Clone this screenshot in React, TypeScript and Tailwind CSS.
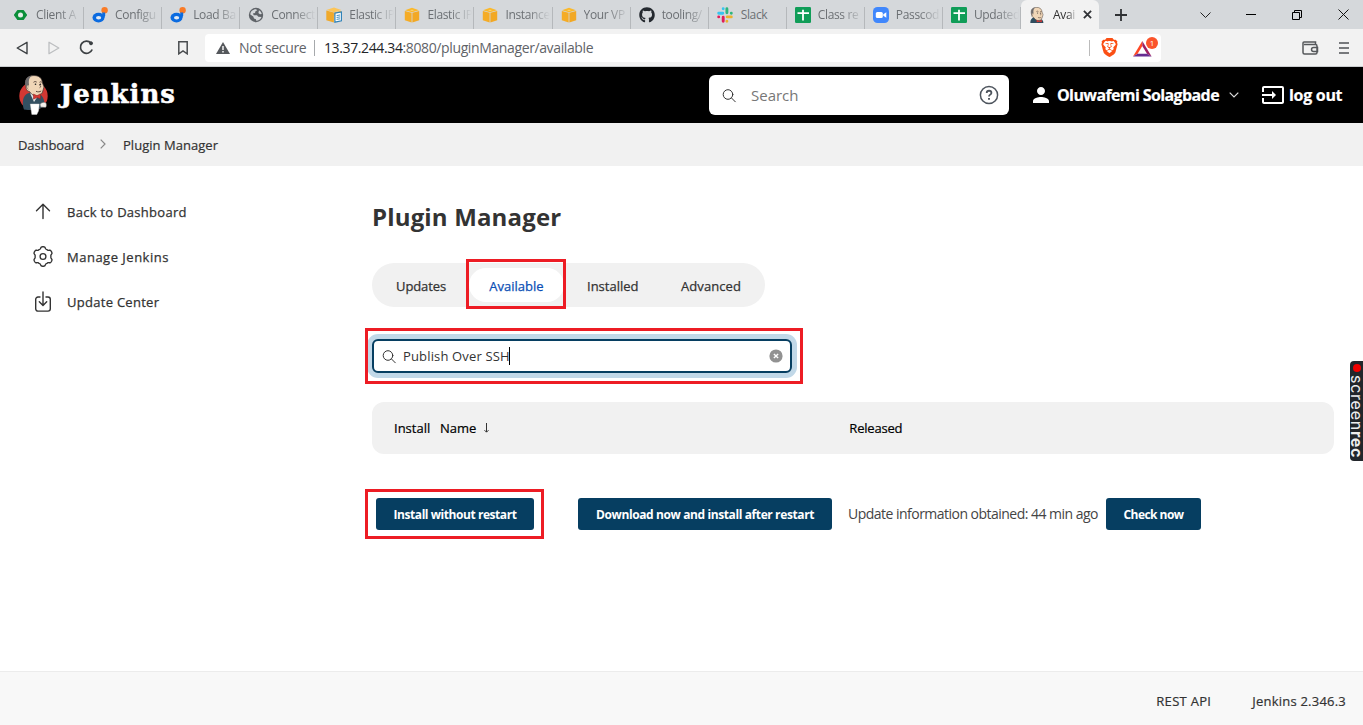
import type { ReactNode } from "react";
import { FaGithub } from "react-icons/fa";
import { SiBrave } from "react-icons/si";
import { MdInput, MdPerson } from "react-icons/md";

const CircleCiIcon = () => (
  <svg viewBox="0 0 16 16" className="size-4">
    <path d="M1.700 8 4.800 3.800h5.400L13.300 8 10.200 12.200H4.800Z" fill="#0b8f3a" stroke="#0b8f3a" strokeWidth="1.500" strokeLinejoin="round" />
    <circle cx="7.500" cy="8" r="2.500" fill="#e6efe9" />
  </svg>
);

const DigitalIcon = () => (
  <svg viewBox="0 0 16 16" className="size-4">
    <circle cx="12.600" cy="3.300" r="3.200" fill="#fa7b26" />
    <ellipse cx="6.500" cy="10.600" rx="6" ry="4.900" fill="#0b6be0" />
    <path d="M10 5.500h3.200v3.200l-1.500 3Z" fill="#0b6be0" />
    <ellipse cx="6.600" cy="10.700" rx="2.600" ry="1.700" fill="#e2eaf3" />
  </svg>
);

const GlobeIcon = () => (
  <svg viewBox="0 0 16 16" className="size-4">
    <circle cx="8" cy="8" r="7.200" fill="#5f6368" />
    <path d="M2.300 7.500C2.300 4.500 4.800 2.200 8 2.200L9.300 3.300 7.500 4.200 7 6 4.800 6.400 5.800 8.200H9l1.300 1.500 3.200.2C12.700 12.300 10.700 13.700 8.200 13.800L8 12.200 6 11.500 5.300 9.500Z" fill="#d5d8db" />
    <path d="M11 3.300c1.400.8 2.400 2.100 2.700 3.700l-1.700.3-1.600-1.300Z" fill="#d5d8db" />
  </svg>
);

const CubeIcon = () => (
  <svg viewBox="0 0 16 16" className="size-4">
    <path d="M1 3.200 8 .8l7 2.400-7 2Z" fill="#fbb829" />
    <path d="M.8 4 7.600 5.800v9.600L.8 13.200Z" fill="#f5ac26" />
    <path d="M15.200 4 8.400 5.800v9.600l6.800-2.200Z" fill="#f2a824" />
    <path d="M6 3.200 8 2.700l2 .5-2 .5Z" fill="#f9d998" />
  </svg>
);

const CubeDocIcon = () => (
  <svg viewBox="0 0 16 16" className="size-4">
    <path d="M.3 3 8 .4 15.300 3 8 5.200Z" fill="#fcc558" />
    <path d="M.3 3.600 7.900 5.600v9.800L.3 13.200Z" fill="#f0a92a" />
    <path d="M15 3.800 8.400 5.600V9H15Z" fill="#f0b03a" />
    <path d="M8.900 6.200 15.400 5v8.800l-6.500 1.400Z" fill="#fff" stroke="#3183b8" strokeWidth="1.200" />
    <path d="m10.600 8.600 3.400-.6m-3.400 2.500 3.400-.6m-3.400 2.500 3.400-.6" stroke="#3183b8" strokeWidth=".9" />
  </svg>
);

const SlackIcon = () => (
  <svg viewBox="0 0 16 16" className="size-4" fill="none" strokeWidth="2.900" strokeLinecap="round">
    <path d="M1.700 6.200h4.100M6.200 1.700h.01" stroke="#36c5f0" />
    <path d="M9.900 1.700v4.100M14.300 6.200h.01" stroke="#2eb67d" />
    <path d="M14.300 9.900h-4.100M9.900 14.300h-.01" stroke="#ecb22e" />
    <path d="M6.200 14.300v-4.100M1.700 9.900h.01" stroke="#e01e5a" />
  </svg>
);

const SheetIcon = () => (
  <svg viewBox="0 0 16 16" className="size-4">
    <rect width="16" height="16" rx="1.200" fill="#109d58" />
    <path d="M2.500 6.200h11.500M8 2.700v10.800" stroke="#fff" strokeWidth="1.800" />
  </svg>
);

const ZoomIcon = () => (
  <svg viewBox="0 0 16 16" className="size-4">
    <rect width="16" height="16" rx="4.500" fill="#4087fc" />
    <rect x="2.800" y="5" width="7" height="6" rx="1.500" fill="#fff" />
    <path d="m10.300 7.200 3-2v5.600l-3-2Z" fill="#fff" />
  </svg>
);

const ButlerHead = () => (
  <g>
    <path d="M7 12C5 5 8 1 14 .6c6-.4 9 2.600 9.500 7.400L25 12l-1.500 5c-1 3-4 4.400-7 4-3-.5-4.500-2.400-6-4.500C8 16.500 7 14 7 12Z" fill="#f0d6b7" stroke="#3b3230" strokeWidth=".7" />
    <path d="M7 12C5 5 7.500 1.400 13 .8c-3 1.700-3.500 5-3 8.700l-1 4.500Z" fill="#6d6b6d" />
    <path d="M9.500 10c-2-.5-2.500 3 0 4.500" fill="#f0d6b7" stroke="#7c6453" strokeWidth=".6" />
    <path d="M14.500 7.300c1-.9 2.200-.9 3.200-.2M20.500 7.300c.8-.7 1.700-.6 2.300 0M17 16.300c2 .9 3.800.6 5.200-.3M20.500 9c0 1.700 2.300 2.500.2 3.700" fill="none" stroke="#4b3931" strokeWidth=".9" />
    <circle cx="16.500" cy="9.300" r=".8" fill="#222" />
    <circle cx="21.500" cy="9.300" r=".7" fill="#222" />
  </g>
);

const ButlerFavicon = () => (
  <svg viewBox="4 0 23 25" className="size-4">
    <path d="M5 25c0-5 2-8 6-9l6 4 6-1c2 2 2.500 4 2.500 6Z" fill="#2f4d5e" />
    <ButlerHead />
    <path d="m15 20 4 2 4-2v4l-4-1-4 1Z" fill="#d33833" />
  </svg>
);

const JenkinsMascot = () => (
  <svg viewBox="0 0 29 40" className="h-10 w-[29px]">
    <circle cx="14.500" cy="21" r="14.200" fill="#d33833" />
    <path d="M5 34.500C3 29 3.500 22 7 19.500c3-2 6-2.500 10-1.500l5 2c3 3 4 8 3 12l-3 1-3 1.500-10 .5Z" fill="#335061" />
    <path d="m11 18 4 9 4-6Z" fill="#e9e9e9" />
    <ButlerHead />
    <path d="m14.500 19 3.500 1.700 3.500-2v5l-3.500-1.200-3.500 1.700Z" fill="#d33833" stroke="#8d1f1c" strokeWidth=".5" />
    <path d="M11.300 29h9l-.8 7-1.700 3.500h-5Z" fill="#fff" stroke="#d8d8d8" strokeWidth=".4" />
    <path d="M21 29.500c1-2 4.500-3 6-1.500.8 1.500.5 4-.5 4.500l-5-.5Z" fill="#f3efec" stroke="#555" strokeWidth=".5" />
  </svg>
);

const SearchGlyph = () => (
  <svg viewBox="0 0 15 15" className="size-[15px]" fill="none" stroke="#333" strokeWidth="1" strokeLinecap="round">
    <circle cx="6" cy="6.500" r="4.800" />
    <path d="m9.600 10.100 3.700 3.700" />
  </svg>
);

const ArrowUpGlyph = () => (
  <svg viewBox="0 0 20 22" className="h-[22px] w-5" fill="none" stroke="#333" strokeWidth="1.400" strokeLinecap="round" strokeLinejoin="round">
    <path d="M10 17.500V3.500M3.500 9.800 10 3.300l6.500 6.500" />
  </svg>
);

const gearOutline =
  Array.from({ length: 120 }, (_, i) => {
    const a = (i / 120) * Math.PI * 2;
    const r = 8.800 + 0.95 * Math.tanh(2.200 * Math.cos(6 * a));
    return `${i ? "L" : "M"}${(10 + r * Math.sin(a)).toFixed(2)} ${(10.500 - r * Math.cos(a)).toFixed(2)}`;
  }).join("") + "Z";

const GearGlyph = () => (
  <svg viewBox="0 0 20 22" className="h-[22px] w-5 shrink-0 overflow-visible" fill="none" stroke="#333" strokeWidth="1.350" strokeLinejoin="round">
    <path d={gearOutline} />
    <circle cx="10" cy="10.500" r="2.900" />
  </svg>
);

const DownloadGlyph = () => (
  <svg viewBox="0 0 20 22" className="h-[22px] w-5" fill="none" stroke="#333" strokeWidth="1.400" strokeLinecap="round" strokeLinejoin="round">
    <path d="M7 6H5A2.300 2.300 0 0 0 2.700 8.300V17.800A2.300 2.300 0 0 0 5 20.100H15A2.300 2.300 0 0 0 17.300 17.800V8.300A2.300 2.300 0 0 0 15 6H13M10 .9V14.200M6.300 10.800 10 14.500l3.700-3.700" />
  </svg>
);

const tabs: { icon: ReactNode; label: string }[] = [
  { icon: <CircleCiIcon />, label: "Client A" },
  { icon: <DigitalIcon />, label: "Configu" },
  { icon: <DigitalIcon />, label: "Load Ba" },
  { icon: <GlobeIcon />, label: "Connect" },
  { icon: <CubeDocIcon />, label: "Elastic IP" },
  { icon: <CubeIcon />, label: "Elastic IP" },
  { icon: <CubeIcon />, label: "Instance" },
  { icon: <CubeIcon />, label: "Your VP" },
  { icon: <FaGithub className="size-4 text-[#24292f]" />, label: "tooling/" },
  { icon: <SlackIcon />, label: "Slack" },
  { icon: <SheetIcon />, label: "Class re" },
  { icon: <ZoomIcon />, label: "Passcod" },
  { icon: <SheetIcon />, label: "Updated" },
];

function TabStrip() {
  return (
    <div className="flex h-[29px] bg-[#d5d8db] pl-[6px] text-xs tracking-[-0.35px] text-[#6c7074]">
      {tabs.map((tab, i) => (
        <div key={i} className="flex w-[78.080px] shrink-0 items-center pl-2 first:pl-[7px]">
          {tab.icon}
          <div className={`h-[29px] w-[46px] ml-[7px] whitespace-nowrap leading-[29px] ${tab.label === "Slack" ? "pl-px" : "[mask-image:linear-gradient(to_right,#000_50%,transparent_98%)]"}`}>
            {tab.label}
          </div>
          <div className="mt-auto ml-auto h-[22px] w-px bg-[#b5b8bb]" />
        </div>
      ))}
      <div className="flex w-[78px] items-center rounded-t-md bg-[#f2f2f2] pl-2 text-[#333]">
        <ButlerFavicon />
        <div className="ml-2 w-6 whitespace-nowrap [mask-image:linear-gradient(to_right,#000_60%,transparent)]">Avai</div>
        <svg viewBox="0 0 10 10" className="ml-[6px] size-[9px]" stroke="#303236" strokeWidth="2"><path d="m1 1 8 8M9 1 1 9" /></svg>
      </div>
      <svg viewBox="0 0 12 12" className="mt-[9px] ml-4 size-3" stroke="#2f3134" strokeWidth="1.800"><path d="M6 0v12M0 6h12" /></svg>
      <div className="ml-auto flex items-center pr-[14px]">
        <svg viewBox="0 0 11 6" className="mr-[35px] h-1.5 w-[11px]" fill="none" stroke="#222"><path d="m.5.500 5 5 5-5" /></svg>
        <div className="mr-9 h-px w-[10px] bg-black" />
        <svg viewBox="0 0 10 10" className="mr-9 size-[10px]" fill="none" stroke="#000"><path d="M.5 2.500h7v7h-7ZM2.500 2.500v-2h7v7h-2" /></svg>
        <svg viewBox="0 0 11 11" className="size-[11px]" stroke="#111"><path d="m.5.500 10 10M10.500.500l-10 10" /></svg>
      </div>
    </div>
  );
}

function AddressBar() {
  return (
    <div className="flex h-[38px] items-center border-b border-[#c9ccce] bg-[#f2f2f2] pl-4 text-sm">
      <svg viewBox="0 0 12 14" className="h-[14px] w-3" fill="none" stroke="#3c4043" strokeWidth="1.400" strokeLinejoin="round"><path d="M11 1.300v11.400L1.200 7Z" /></svg>
      <svg viewBox="0 0 12 14" className="ml-5 h-[14px] w-3" fill="none" stroke="#bcbec0" strokeWidth="1.300" strokeLinejoin="round"><path d="M1 1.300v11.400L10.800 7Z" /></svg>
      <svg viewBox="0 0 15 15" className="ml-[19px] size-[15px]" fill="none" stroke="#3c4043" strokeWidth="1.700"><path d="M12 3A6.100 6.100 0 1 0 13.200 9.500" /><circle cx="12" cy="3.300" r="1.500" fill="#3c4043" stroke="#3c4043" strokeWidth="1" /></svg>
      <svg viewBox="0 0 10 14" className="ml-[84px] h-[14px] w-[10px]" fill="none" stroke="#4a4d50" strokeWidth="1.500"><path d="M.8.800h8.400v12L5 10 .8 12.800Z" /></svg>
      <div className="ml-[17px] flex h-7 w-[956px] items-center rounded bg-white pl-[11px] text-[#5f6368]">
        <svg viewBox="0 0 14 12" className="h-3 w-[14px]"><path d="M7 0 14 12H0Z" fill="#55585c" /><path d="M7 4v4M7 9v1.500" stroke="#fff" strokeWidth="1.400" /></svg>
        <span className="ml-[9px] w-[75px] tracking-[-0.38px]">Not secure</span>
        <span className="h-4 w-px bg-[#a6a9ac]" />
        <span className="ml-[9px] tracking-[-0.38px]"><span className="text-[#222427]">13.37.244.34</span>:8080/pluginManager/available</span>
        <span className="ml-auto mr-[10px] h-4 w-px bg-[#bbb]" />
        <SiBrave className="h-[19px] w-[19px] text-[#fb4f14]" />
        <div className="mt-px ml-[14px] flex w-[28px]">
          <svg viewBox="0 0 19 17" className="h-[17px] w-[19px] shrink-0">
            <path d="M9.300 1 0 16.500l4.600-2.700L9.300 6Z" fill="#ff4724" />
            <path d="M9.300 1 18.600 16.500 14 13.800 9.300 6Z" fill="#9e1f63" />
            <path d="M0 16.500h18.600L14 13.800H4.600Z" fill="#662d91" />
          </svg>
          <div className="-mt-[3px] -ml-[6px] flex size-3 shrink-0 items-center justify-center rounded-full bg-[#fb542b] text-[8px] text-white">1</div>
        </div>
      </div>
      <svg viewBox="0 0 17 14" className="ml-[141px] h-[14px] w-[17px]" fill="none" stroke="#55585b" strokeWidth="1.500"><path d="M13.500 3.600V1H2Q1 1 1 2v9.500Q1 13 2.500 13h11q1.500 0 1.500-1.500V5.200q0-1.600-1.500-1.600H2M15.500 6.500h-4a1.900 1.900 0 0 0 0 3.900h4Z" /></svg>
      <svg viewBox="0 0 10 12" className="ml-[20px] h-3 w-[10px]" stroke="#4f5255" strokeWidth="1.700"><path d="M0 1h10M0 6h10M0 11h10" /></svg>
    </div>
  );
}

function JenkinsHeader() {
  return (
    <header className="flex h-14 items-center bg-black pl-[19px] text-base font-bold text-white">
      <JenkinsMascot />
      <span className="ml-3 w-[649px] pb-[3px] font-['DejaVu_Serif',serif] text-[26px] leading-none tracking-[0.95px] [-webkit-text-stroke:0.5px]">Jenkins</span>
      <div className="flex h-10 w-[300px] items-center rounded-md bg-white pl-[13px] font-normal">
        <SearchGlyph />
        <span className="ml-[14px] text-[15px] text-[#777]">Search</span>
        <svg viewBox="0 0 20 20" className="ml-auto mr-[10px] size-5" fill="none" stroke="#4d545d" strokeWidth="1.500"><circle cx="10" cy="10" r="8.600" /><path d="M7.700 7.900C7.700 5 12.400 5 12.400 7.900c0 1.800-2.400 1.700-2.400 3.600" strokeWidth="1.800" /><path d="M10 13v1.800" strokeWidth="1.900" /></svg>
      </div>
      <MdPerson className="ml-[20px] size-6" />
      <span className="ml-1 w-[172px] whitespace-nowrap tracking-[-0.61px] [-webkit-text-stroke:0.2px]">Oluwafemi Solagbade</span>
      <svg viewBox="0 0 10 6" className="h-1.5 w-[10px]" fill="none" stroke="#ddd" strokeWidth="1.200"><path d="m.7.700 4.300 4.300L9.300.700" /></svg>
      <MdInput className="ml-[22px] size-6" />
      <span className="ml-[4px] whitespace-nowrap tracking-[-0.3px] [-webkit-text-stroke:0.2px]">log out</span>
    </header>
  );
}

function Breadcrumbs() {
  return (
    <nav className="flex h-[43px] items-center bg-[#f1f1f1] pt-0.5 pl-[18px] text-[13px] text-[#333] [-webkit-text-stroke:0.2px]">
      <span className="w-[82px] tracking-[-0.1px]">Dashboard</span>
      <svg viewBox="0 0 6 10" className="mb-[3px] h-[10px] w-1.5" fill="none" stroke="#888" strokeWidth="1.200"><path d="m.7.700 4.300 4.300L.7 9.300" /></svg>
      <span className="ml-[17px] tracking-[0.03px]">Plugin Manager</span>
    </nav>
  );
}

function SideLink({ icon, children }: { icon: ReactNode; children: ReactNode }) {
  return (
    <div className="flex h-[45px] items-center text-[13px] tracking-[0.28px] text-[#333]">
      <span className="flex w-5 justify-center">{icon}</span>
      <span className="pt-0.5 pl-[14px] [-webkit-text-stroke:0.25px]">{children}</span>
    </div>
  );
}

const Highlight = ({ className }: { className: string }) => (
  <div className={`pointer-events-none absolute border-3 border-[#ed1c24] ${className}`} />
);

function Button({ className, children }: { className: string; children: ReactNode }) {
  return (
    <button className={`h-8 shrink-0 whitespace-nowrap rounded-[3px] bg-[#063e61] pt-0.5 text-xs font-bold text-white ${className}`}>{children}</button>
  );
}

export default function App() {
  return (
    <div className="relative flex h-[725px] w-[1363px] flex-col overflow-hidden bg-white font-['Open_Sans','Noto_Sans',sans-serif]">
      <TabStrip />
      <AddressBar />
      <JenkinsHeader />
      <Breadcrumbs />
      <div className="flex flex-1">
        <aside className="w-[372px] pt-[23px] pl-[33px]">
          <SideLink icon={<ArrowUpGlyph />}>Back to Dashboard</SideLink>
          <SideLink icon={<GearGlyph />}><span className="tracking-[0.5px]">Manage Jenkins</span></SideLink>
          <SideLink icon={<DownloadGlyph />}>Update Center</SideLink>
        </aside>
        <main className="w-[962px]">
          <h1 className="mt-[34px] text-[24px] leading-[34px] font-bold tracking-[0.16px] text-[#333]">Plugin Manager</h1>
          <div className="relative mt-[29px] flex h-11 w-[393px] items-center rounded-full bg-[#f1f1f1] text-[13px] text-[#333] [-webkit-text-stroke:0.25px]">
            <span className="ml-6 w-[73px] pt-[3px] tracking-[-0.1px]">Updates</span>
            <span className="flex h-[34px] w-[95px] items-center justify-center rounded-full bg-white pt-[3px] text-[#0b4fb5]">Available</span>
            <span className="ml-[23px] w-[94px] pt-[3px]">Installed</span>
            <span className="pt-[3px] tracking-[0.07px]">Advanced</span>
            <Highlight className="-top-1 left-[94px] h-[50px] w-[100px]" />
          </div>
          <div className="relative mt-8 flex h-[34px] w-[420px] items-center rounded-md border-2 border-[#063e61] bg-white pl-2 ring-[5px] ring-[#c1d8e8]">
            <SearchGlyph />
            <span className="ml-[6px] pt-px text-[13px] tracking-[0.15px] text-[#333]">Publish Over SSH</span>
            <span className="-ml-px h-[18px] w-px bg-black" />
            <svg viewBox="0 0 14 14" className="ml-auto mr-[7px] size-[14px]"><circle cx="7" cy="7" r="6.600" fill="#929292" /><path d="m4.900 4.900 4.200 4.200m0-4.200L4.900 9.100" stroke="#fff" strokeWidth="1.400" /></svg>
            <Highlight className="-top-[13px] -left-[9px] h-14 w-[438px]" />
          </div>
          <div className="mt-[29px] flex h-[52px] items-center rounded-xl bg-[#f1f1f1] pl-[22px] text-[13px] text-black [-webkit-text-stroke:0.2px]">
            <span className="w-[46px] pt-0.5">Install</span>
            <span className="pt-0.5">Name</span>
            <svg viewBox="0 0 7 10" className="ml-[7px] h-[10px] w-[7px]" fill="none" stroke="#333" strokeWidth="1"><path d="M3.500 0v9M1.500 7.200l2 2 2-2" /></svg>
            <span className="ml-[359px] pt-0.5 tracking-[-0.2px]">Released</span>
          </div>
          <div className="relative mt-11 flex items-center pl-1">
            <Button className="w-[158px] tracking-[-0.44px]">Install without restart</Button>
            <Button className="ml-11 w-[254px] tracking-[-0.39px]">Download now and install after restart</Button>
            <span className="ml-4 w-[258px] whitespace-nowrap text-sm tracking-[-0.52px] text-[#444]">Update information obtained: 44 min ago</span>
            <Button className="w-[95px] tracking-[-0.53px]">Check now</Button>
            <Highlight className="-top-[9px] -left-[7px] h-[50px] w-[179px]" />
          </div>
        </main>
      </div>
      <footer className="flex h-[54px] items-center justify-end border-t border-[#ececec] bg-[#f8f8f8] pr-[17px] text-[13px] text-[#333] [-webkit-text-stroke:0.2px]">
        <span className="mt-1.5 tracking-[0.3px]">REST API</span>
        <span className="mt-1.5 ml-[41px] tracking-[0.22px]">Jenkins 2.346.3</span>
      </footer>
      <div className="absolute top-[361px] left-[1350px] flex h-[100px] w-[13px] items-center rounded-l bg-[#22262b] pt-[14px] font-['Inter',sans-serif] leading-[13px] text-[#eee] [writing-mode:vertical-rl]">
        <span className="absolute top-[3px] left-[3px] size-2 rounded-full bg-[#f00000]" />
        <span className="whitespace-nowrap text-[16px] tracking-[0.75px]">screen<b>rec</b></span>
      </div>
    </div>
  );
}
